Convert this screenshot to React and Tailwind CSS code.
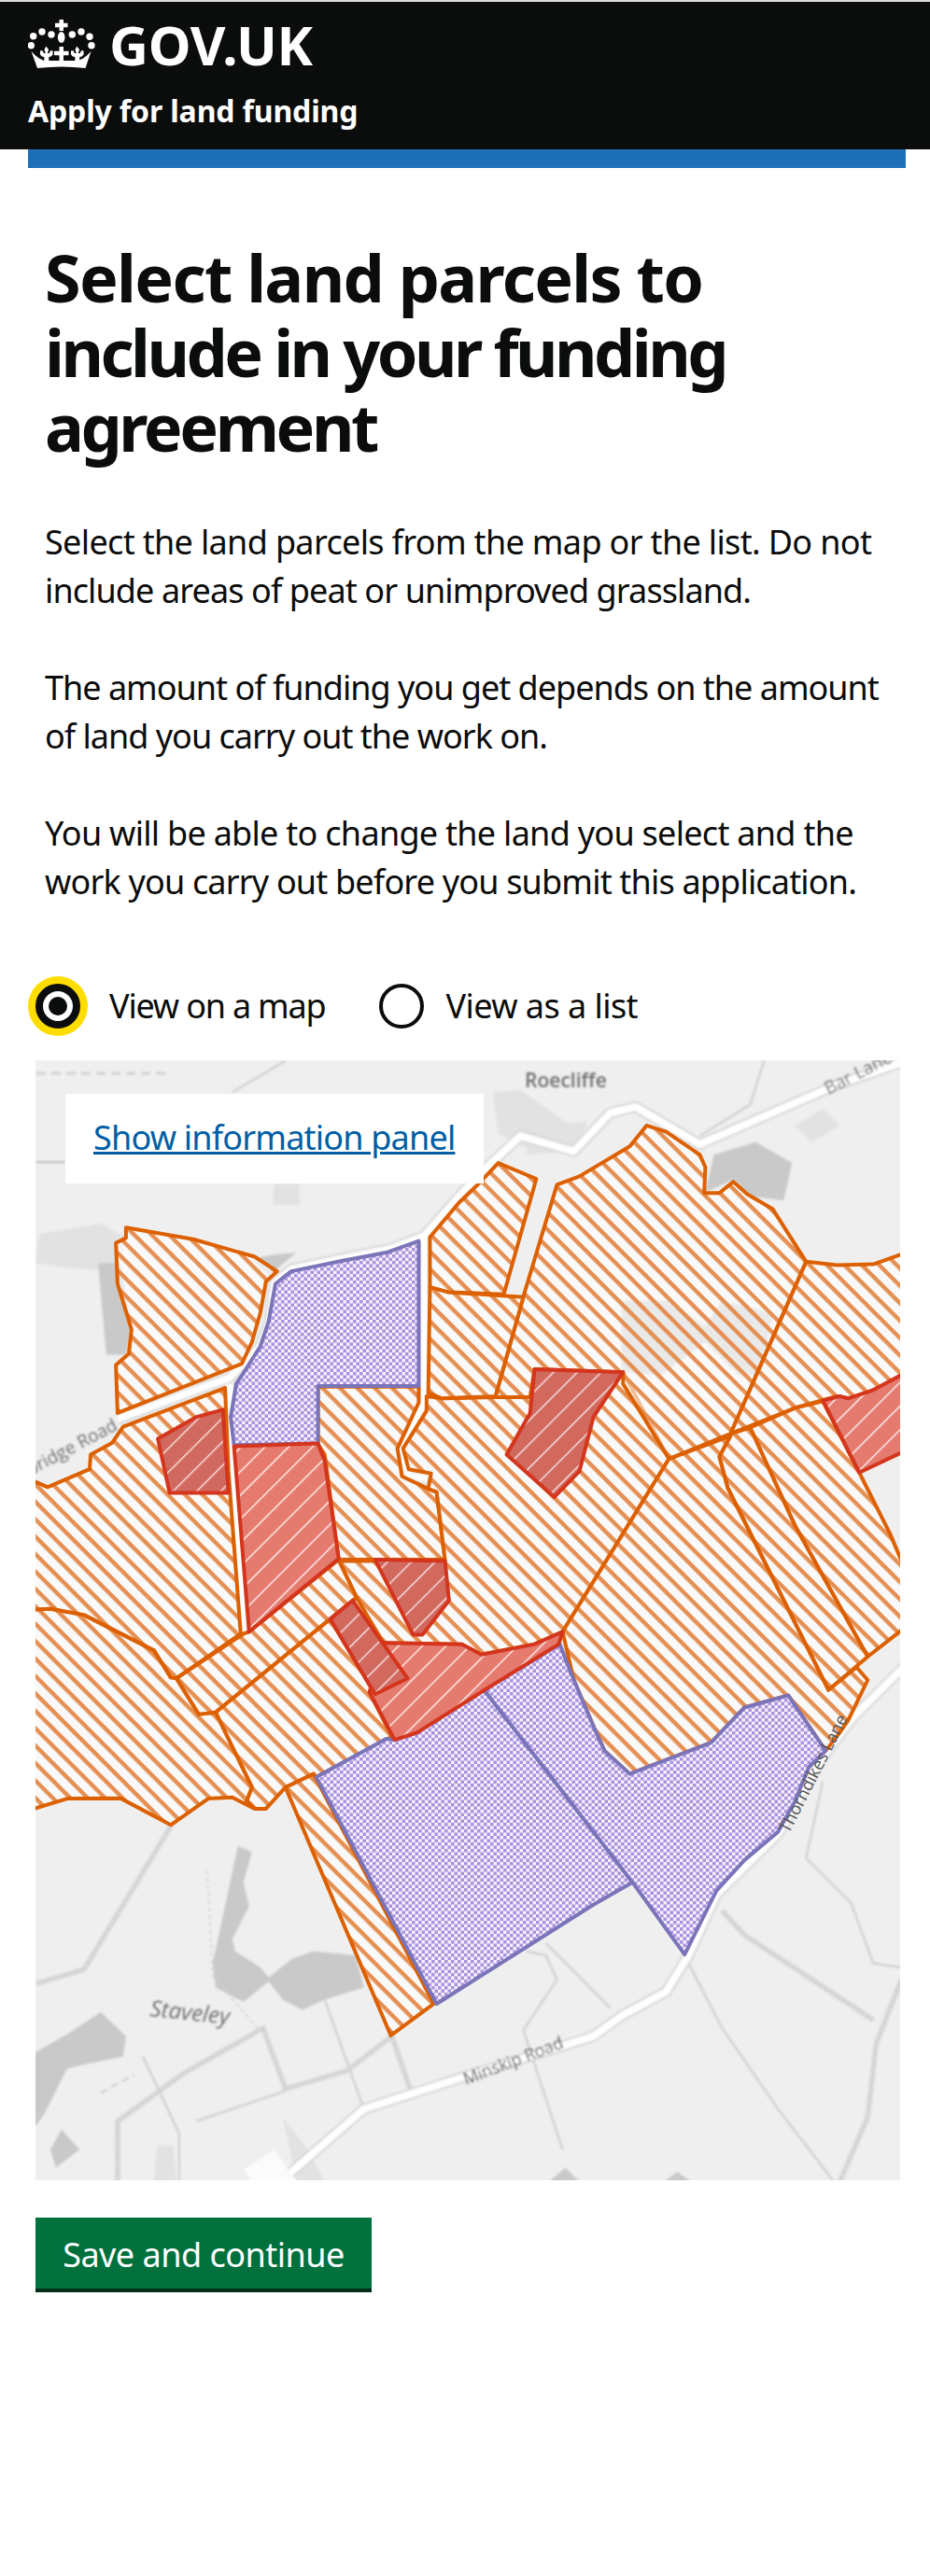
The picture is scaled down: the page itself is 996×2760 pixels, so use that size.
import React from 'react';

// reference crops were stretched, so traced points go through these two helpers
const T = (x, y) => [30 + x * 0.5995, 1130 + y * 0.4464];
const L = (x, y) => [30 + x * 0.5995, 1800 + y * 0.4337];

const pts = (list) => list.map((p) => p.join(',')).join(' ');
const line = (list) => 'M' + list.map((p) => p.join(' ')).join(' L');

const orange = [
  [T(175,415),T(295,443),T(405,485),T(445,520),T(425,545),T(415,620),T(400,690),T(382,742),T(160,860),T(157,745),T(180,718),T(185,660),T(160,550),T(157,452),T(175,440)],
  [T(-30,1000),T(35,1038),T(110,995),T(112,960),T(150,932),T(170,893),T(352,800),T(358,1000),T(380,1390),T(265,1497),T(255,1495),T(225,1430),T(100,1345),T(40,1330),T(-30,1335)],
  [T(518,797),T(698,797),T(698,835),T(660,945),T(668,1012),T(715,1042),T(730,1050),T(745,1212),T(555,1212),T(530,960),T(518,935)],
  [T(712,820),T(740,825),T(835,822),T(897,822),T(905,755),T(1063,762),T(1145,970),T(955,1385),T(905,1415),T(810,1440),T(775,1415),T(635,1412),T(587,1303),T(555,1215),T(745,1215),T(730,1050),T(715,1042),T(720,1005),T(680,995),T(670,945),T(712,855)],
  [T(1105,170),T(1140,185),T(1200,240),T(1210,270),T(1208,332),T(1235,332),T(1260,305),T(1285,335),T(1330,370),T(1390,497),T(1255,910),T(1145,970),T(1063,790),T(1063,762),T(905,755),T(897,822),T(835,822),T(885,580),T(945,312),T(985,292),T(1075,220)],
  [T(840,260),T(908,298),T(850,575),T(750,570),T(718,558),T(718,438),T(770,355),T(805,310)],
  [T(718,558),T(750,570),T(885,582),T(835,820),T(740,825),T(715,812)],
  [T(1390,497),T(1445,505),T(1510,503),T(1600,460),T(1600,750),T(1510,805),T(1465,825),T(1445,820),T(1370,848),T(1255,910)],
  [T(1290,895),T(1370,848),T(1420,832),T(1485,1003),T(1540,1150),T(1600,1340),T(1500,1445),T(1370,1130)],
  [T(1255,910),T(1235,965),T(1250,1040),T(1430,1525),T(1500,1445),T(1370,1130),T(1290,895)],
  [T(1145,970),T(955,1385),L(975,0),L(1015,130),L(1030,175),L(1075,232),L(1220,155),L(1280,68),L(1358,38),L(1425,175),L(1450,130),L(1465,100),L(1500,0),T(1480,1470),T(1430,1525),T(1250,1040),T(1235,965),T(1255,915)],
  [T(265,1497),T(385,1390),T(395,1385),T(555,1212),T(587,1303),L(335,80),L(305,85)],
  [L(335,80),L(400,265),L(390,300),L(405,318),L(425,318),L(460,265),L(510,232),L(515,240),L(650,140),L(610,30),T(620,1535),T(540,1355),T(587,1303)],
  [T(-30,1335),T(40,1330),T(100,1345),T(225,1430),T(255,1495),T(265,1497),L(305,85),L(335,80),L(400,265),L(390,300),L(405,318),L(365,290),L(322,293),L(255,358),L(165,292),L(70,293),L(-30,335)],
  [L(460,265),L(510,232),L(725,800),L(648,878)],
];

const purple = [
  [T(698,447),T(698,795),T(518,795),T(518,933),T(368,937),T(362,870),T(372,790),T(382,770),T(415,700),T(430,640),T(442,550),T(470,520),T(560,495),T(640,475)],
  [L(655,148),L(695,130),L(815,25),L(1080,500),L(1010,555),L(730,800),L(515,240),L(640,145)],
  [T(950,1415),L(975,0),L(1015,130),L(1030,175),L(1075,232),L(1220,155),L(1280,68),L(1358,38),L(1425,175),L(1395,215),L(1370,300),L(1340,375),L(1280,445),L(1230,520),L(1173,678),L(1080,500),L(815,25)],
];

const red = [
  [T(368,940),T(518,933),T(530,975),T(555,1210),T(395,1385)],
  [T(635,1412),T(775,1415),T(810,1440),T(905,1415),T(955,1385),T(948,1415),L(815,25),L(695,130),L(655,148),L(610,30)],
  [T(1420,830),T(1450,820),T(1465,825),T(1510,805),T(1600,740),T(1600,930),T(1485,1003)],
];

const redDark = [
  [T(232,922),T(300,870),T(348,852),T(358,1052),T(253,1052)],
  [T(905,755),T(1063,762),T(1010,870),T(985,1000),T(940,1062),T(855,960),T(897,860)],
  [T(620,1212),T(745,1215),T(752,1310),T(705,1392),T(688,1392)],
  [T(580,1310),T(540,1355),T(620,1535),T(678,1497)],
];

const woods = [
  [T(1225,240),T(1300,210),T(1365,260),T(1350,350),T(1290,340),T(1260,300),T(1210,330)],
  [T(1060,590),T(1140,590),T(1210,650),T(1240,590),T(1330,620),T(1310,770),T(1270,770),T(1210,690),T(1130,770),T(1060,760)],
  [T(125,500),T(165,500),T(185,660),T(175,720),T(140,720)],
  [T(440,480),T(480,475),T(430,530),T(400,490)],
  [L(375,410),L(400,425),L(385,500),L(395,560),L(365,640),L(370,670),L(415,710),L(430,735),L(470,690),L(510,670),L(585,680),L(600,760),L(530,790),L(490,815),L(455,790),L(430,745),L(385,795),L(335,760),L(330,700)],
  [L(130,820),L(175,880),L(170,930),L(100,950),L(70,960),L(30,1070),L(15,1100),L(0,1100),L(0,930),L(70,875)],
  [L(60,1110),L(92,1160),L(50,1205),L(40,1160)],
  [L(930,1240),L(960,1205),L(985,1240)],
  [L(1135,1240),L(1160,1215),L(1185,1240)],
];

const lightAreas = [
  [T(20,430),T(130,405),T(175,440),T(160,520),T(60,510),T(14,500)],
  [T(905,170),T(1000,160),T(980,230),T(890,240)],
  [T(830,90),T(880,85),T(970,170),T(900,230),T(840,190)],
  [T(440,310),T(485,310),T(485,360),T(437,360)],
  [T(1370,170),T(1420,130),T(1450,170),T(1400,210)],
  [L(230,1150),L(260,1150),L(265,1240),L(225,1240)],
  [L(455,1080),L(500,1160),L(530,1240),L(480,1240)],
];

const roads = [
  [T(160,875),T(360,775),T(415,700),T(432,640),T(440,550),T(470,515),T(560,490),T(650,465),T(708,435),T(770,340),T(820,270),T(880,195),T(975,232),T(1040,140),T(1085,125),T(1200,215),T(1440,75),T(1600,0)],
  [T(708,435),T(708,800),T(708,835),T(665,945),T(680,1010),T(712,1018)],
  [T(360,790),T(368,1000),T(385,1390)],
  [L(1600,-80),L(1475,90),L(1425,180),L(1340,380),L(1230,530),L(1180,680),L(1140,770),L(1060,830),L(1010,880),L(780,980),L(690,1020),L(600,1060),L(450,1240)],
];

// wider grey lanes under the thin field boundaries
const lanes = [
  [L(15,750),L(100,715),L(190,510),L(260,350)],
  [L(160,1240),L(160,1090),L(280,970),L(420,860),L(460,1010),L(570,965),L(650,880),L(685,1020),L(600,1060)],
  [L(1560,740),L(1515,900),L(1500,1080),L(1450,1240)],
  [L(1240,570),L(1280,630),L(1510,840)],
];

const tracks = [
  [T(365,90),T(460,15)],
  [T(1200,195),T(1290,120),T(1315,15)],
  [L(205,930),L(270,1120),L(270,1240)],
  [L(530,790),L(600,1060)],
  [L(300,1090),L(460,1015)],
  [L(890,670),L(925,680),L(945,740),L(885,865),L(955,1160)],
  [L(925,650),L(1040,810)],
  [L(1180,700),L(1240,860),L(1340,1060),L(1440,1240)],
  [L(1420,250),L(1390,440),L(1470,550),L(1510,700),L(1560,710)],
];

function ParcelMap() {
  return (
    <svg className="block w-full h-full font-['Open_Sans',sans-serif]" viewBox="38 1136 926 1200" xmlns="http://www.w3.org/2000/svg">
      <defs>
        <pattern id="hatch" width="13.2" height="13.2" patternUnits="userSpaceOnUse" patternTransform="rotate(45)">
          <rect width="13.2" height="13.2" fill="#fff" fillOpacity="0.6" />
          <rect width="13.2" height="4.4" fill="#e58f52" />
        </pattern>
        <pattern id="check" width="7" height="7" patternUnits="userSpaceOnUse">
          <rect width="7" height="7" fill="#f4f1fb" />
          <rect width="3.5" height="3.5" fill="#ab92df" />
          <rect x="3.5" y="3.5" width="3.5" height="3.5" fill="#ab92df" />
        </pattern>
        <pattern id="redHatch" width="18" height="18" patternUnits="userSpaceOnUse" patternTransform="rotate(-45)">
          <rect width="18" height="18" fill="#e57b6f" />
          <rect width="18" height="1.6" fill="#fbe4e0" />
        </pattern>
        <pattern id="redDarkHatch" width="18" height="18" patternUnits="userSpaceOnUse" patternTransform="rotate(-45)">
          <rect width="18" height="18" fill="#d1695f" />
          <rect width="18" height="1.6" fill="#f3d5d1" />
        </pattern>
        <filter id="soft"><feGaussianBlur stdDeviation="0.9" /></filter>
      </defs>

      <rect x="38" y="1136" width="926" height="1200" fill="#efefef" />

      {/* base map */}
      <g filter="url(#soft)">
        {lightAreas.map((a, i) => <polygon key={i} points={pts(a)} fill="#e2e2e2" />)}
        {woods.map((w, i) => <polygon key={i} points={pts(w)} fill="#c9c9c9" />)}
        {lanes.map((t, i) => <path key={i} d={line(t)} fill="none" stroke="#dadada" strokeWidth="6" />)}
        {lanes.map((t, i) => <path key={i} d={line(t)} fill="none" stroke="#c6c6c6" strokeWidth="1.5" strokeDasharray="3 3" />)}
        {tracks.map((t, i) => <path key={i} d={line(t)} fill="none" stroke="#d2d2d2" strokeWidth="2.5" />)}
        <path d={line([T(15,45),T(250,45)])} fill="none" stroke="#d2d2d2" strokeWidth="3" strokeDasharray="10 6" />
        <path d={line([L(130,1020),L(190,975)])} fill="none" stroke="#c4c4c4" strokeWidth="1.5" strokeDasharray="8 5" />
        <path d={line([L(320,470),L(330,730),L(410,860)])} fill="none" stroke="#cfcfcf" strokeWidth="1.5" strokeDasharray="4 4" />
        <path d={line([T(14,258),T(66,258)])} fill="none" stroke="#bbb" strokeWidth="2" />
        {roads.map((r, i) => <path key={i} d={line(r)} fill="none" stroke="#d4d4d4" strokeWidth="12" strokeLinejoin="round" />)}
        {roads.map((r, i) => <path key={i} d={line(r)} fill="none" stroke="#fff" strokeWidth="8" strokeLinejoin="round" />)}
        <polygon points={pts([L(385,1210),L(440,1160),L(480,1240),L(400,1240)])} fill="#fbfbfb" />
        <g fill="#6f6f6f">
          <text x="606" y="1165" fontSize="21" fontWeight="600" textAnchor="middle">Roecliffe</text>
          <text x="0" y="0" fontSize="19" transform="translate(887 1173) rotate(-27)">Bar Lane</text>
          <text x="0" y="0" fontSize="19" textAnchor="end" transform="translate(127 1531) rotate(-28)">bridge Road</text>
          <text x="0" y="0" fontSize="24" fontStyle="italic" transform="translate(160 2160) rotate(6)">Staveley</text>
          <text x="0" y="0" fontSize="18" transform="translate(499 2234) rotate(-21)" fill="#555">Minskip Road</text>
        </g>
      </g>

      {/* parcels */}
      <g strokeWidth="4" strokeLinejoin="round">
        {orange.map((p, i) => <polygon key={i} points={pts(p)} fill="url(#hatch)" stroke="#dd6000" />)}
        {purple.map((p, i) => <polygon key={i} points={pts(p)} fill="url(#check)" stroke="#7a74b9" />)}
        {red.map((p, i) => <polygon key={i} points={pts(p)} fill="url(#redHatch)" stroke="#d4351c" />)}
        {redDark.map((p, i) => <polygon key={i} points={pts(p)} fill="url(#redDarkHatch)" stroke="#d4351c" />)}
      </g>

      {/* this label sits on top of the parcel edge */}
      <text x="0" y="0" fontSize="18" fill="#555" transform="translate(845 1965) rotate(-63)">Thorndikes Lane</text>
    </svg>
  );
}

function Fleur({ x }) {
  return (
    <path
      transform={`translate(${x} 0)`}
      d="M0 29.500l2.800 3.800L1.500 37h2l1-2.500 2.500-.5 .5 4-2 2.500-2.500 .5V46h-5v-5l-2.500-.5-2-2.500 .5-4 2.500 .5 1 2.500h2l-1.300-3.700z"
    />
  );
}

function Crown() {
  return (
    <svg className="block w-[74px] h-[56px]" viewBox="0 0 74 56" xmlns="http://www.w3.org/2000/svg" fill="#fff">
      {[[5.7,18.7],[15,14],[25,17],[47.3,17],[57,14],[66,19.3],[3.3,28.7],[68,28.7]].map(([cx, cy], i) => (
        <circle key={i} cx={cx} cy={cy} r="3.7" />
      ))}
      {/* top cross and orb */}
      <path d="M33.500 1h4.500v3.700h4.500v4.500H38V13h-4.500V9.200H29V4.700h4.500z" />
      <ellipse cx="35.700" cy="20" rx="3.800" ry="6" />
      {/* crown band */}
      <path d="M3.500 35L8 39.500l4 3 5 2.500h37l5-2.500 4-3 4.500-4.500-6 18Q36 50 10 53z" />
      <Fleur x={19.3} />
      <Fleur x={52.3} />
      <path d="M33.500 30h4.500v4.700h5.500v4.600H38V46h-4.500v-6.700H28v-4.600h5.500z" />
    </svg>
  );
}

function Radio({ selected, label, spacing }) {
  return (
    <div className="flex items-center">
      {selected ? (
        <span className="flex items-center justify-center w-[64px] h-[64px] rounded-full bg-[#ffdd00]">
          <span className="flex items-center justify-center w-[48px] h-[48px] rounded-full border-[8px] border-[#0b0c0c] bg-white">
            <span className="block w-[20px] h-[20px] rounded-full bg-[#0b0c0c]" />
          </span>
        </span>
      ) : (
        <span className="block w-[48px] h-[48px] rounded-full border-[4px] border-[#0b0c0c]" />
      )}
      <span className={`ml-[23px] ${spacing}`}>{label}</span>
    </div>
  );
}

export default function App() {
  return (
    <div className="min-h-[2760px] bg-white text-[#0b0c0c] font-['Noto_Sans',sans-serif]">
      <header className="h-[160px] bg-[#0b0c0c] border-t-2 border-[#dddddd] text-white px-[30px]">
        <div className="flex items-center pt-[18px] h-[74px]">
          <Crown />
          <span className="ml-[13px] text-[58px] leading-none font-bold tracking-[-0.3px]">GOV.UK</span>
        </div>
        <div className="mt-[23px] text-[32px] leading-[40px] font-bold tracking-[-0.15px]">Apply for land funding</div>
      </header>
      <div className="ml-[30px] mr-[26px] h-[20px] bg-[#1d70b8]" />

      <main className="px-[48px] pt-[77px]">
        <h1 className="text-[70px] leading-[80px] font-bold whitespace-nowrap">
          <span className="block tracking-[-1.65px]">Select land parcels to</span>
          <span className="block tracking-[-3.5px]">include in your funding</span>
          <span className="block tracking-[-3.4px]">agreement</span>
        </h1>
        <div className="mt-[58px] flex flex-col gap-[52px] text-[36px] leading-[52px] whitespace-nowrap">
          <p>
            <span className="block tracking-[-0.66px]">Select the land parcels from the map or the list. Do not</span>
            <span className="block tracking-[-0.9px]">include areas of peat or unimproved grassland.</span>
          </p>
          <p>
            <span className="block tracking-[-1px]">The amount of funding you get depends on the amount</span>
            <span className="block tracking-[-1px]">of land you carry out the work on.</span>
          </p>
          <p>
            <span className="block tracking-[-0.72px]">You will be able to change the land you select and the</span>
            <span className="block tracking-[-0.82px]">work you carry out before you submit this application.</span>
          </p>
        </div>
      </main>

      <div className="mt-[75px] pl-[30px] flex items-center gap-[58px] text-[36px]">
        <Radio selected label="View on a map" spacing="tracking-[-1.2px]" />
        <Radio label="View as a list" spacing="tracking-[-0.55px]" />
      </div>

      <div className="relative mt-[26px] ml-[38px] w-[926px] h-[1200px]">
        <ParcelMap />
        <div className="absolute left-[32px] top-[36px] w-[448px] h-[96px] bg-white flex items-center pl-[30px] pb-[3px]">
          <a href="#" className="text-[36px] text-[#005ea5] underline tracking-[-0.8px]">Show information panel</a>
        </div>
      </div>

      <button className="block mt-[40px] ml-[38px] w-[360px] h-[80px] pt-[3px] bg-[#00703c] border-b-4 border-[#002d18] text-white text-[36px] tracking-[-0.5px]">
        Save and continue
      </button>
    </div>
  );
}
